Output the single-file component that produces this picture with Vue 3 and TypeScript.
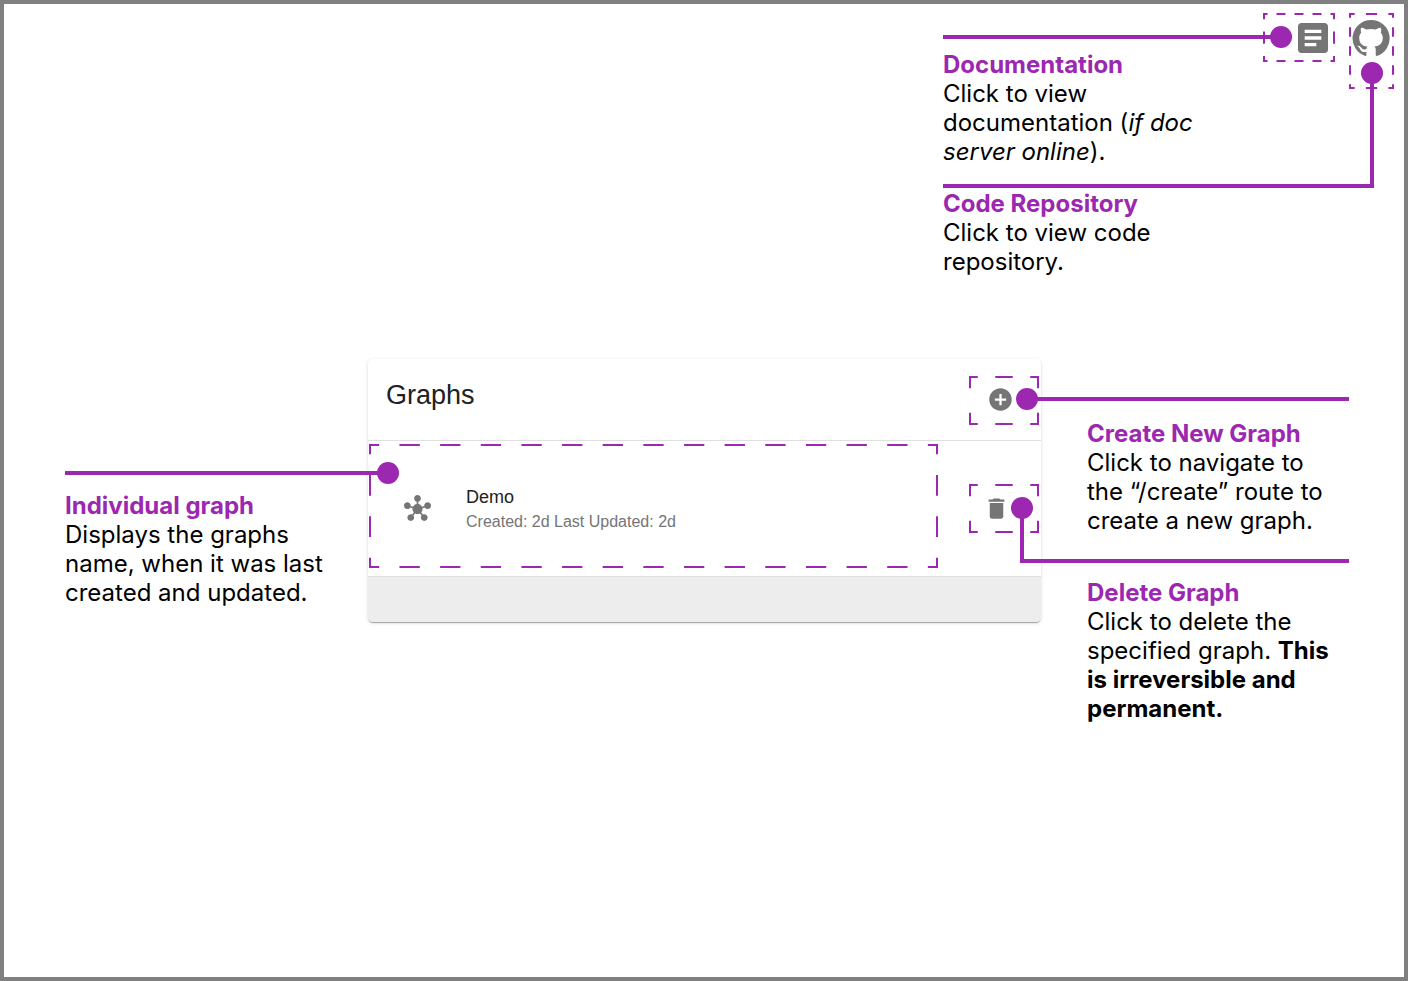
<script setup lang="ts">
import { defineComponent, h } from 'vue'

interface Graph {
  name: string
  created: string
  updated: string
}

const graphs: Graph[] = [{ name: 'Demo', created: '2d', updated: '2d' }]

// A dashed frame: each side holds a whole number of dash periods,
// with half a dash at either corner.
const DashedFrame = defineComponent({
  props: {
    across: { type: Number, required: true },
    down: { type: Number, required: true },
  },
  setup(props) {
    const side = (x1: string, y1: string, x2: string, y2: string, periods: number) =>
      h('line', {
        x1,
        y1,
        x2,
        y2,
        pathLength: periods * 4,
        stroke: '#9c27b0',
        'stroke-width': 4,
        'stroke-dasharray': '2 2',
        'stroke-dashoffset': 1,
      })
    return () =>
      h('svg', { 'aria-hidden': 'true' }, [
        side('0', '0', '100%', '0', props.across),
        side('0', '100%', '100%', '100%', props.across),
        side('0', '0', '0', '100%', props.down),
        side('100%', '0', '100%', '100%', props.down),
      ])
  },
})
</script>

<template>
  <div class="page">
    <header class="top">
      <div class="top-notes">
        <section class="note">
          <h2>Documentation</h2>
          <p>Click to view documentation (<em>if doc server online</em>).</p>
        </section>
        <section class="note">
          <h2>Code Repository</h2>
          <p>Click to view code repository.</p>
        </section>
      </div>
      <div class="target docs">
        <a href="#docs" aria-label="Documentation">
          <svg viewBox="0 0 24 24" width="40" height="40">
            <path d="M19 3H5c-1.1 0-2 .9-2 2v14c0 1.1.9 2 2 2h14c1.1 0 2-.9 2-2V5c0-1.1-.9-2-2-2zm-5 14H7v-2h7v2zm3-4H7v-2h10v2zm0-4H7V7h10v2z" />
          </svg>
        </a>
        <DashedFrame class="frame" :across="4" :down="2" />
        <span class="wire"></span>
        <span class="dot"></span>
      </div>
      <div class="target repo">
        <a href="#repository" aria-label="Code repository">
          <svg viewBox="0 0 24 24" width="40" height="40">
            <path d="M12 1.27a11 11 0 00-3.48 21.46c.55.09.73-.28.73-.55v-1.84c-3.03.64-3.67-1.46-3.67-1.46-.55-1.29-1.28-1.65-1.28-1.65-.92-.65.1-.65.1-.65 1.1 0 1.73 1.1 1.73 1.1.92 1.65 2.57 1.2 3.21.92a2 2 0 01.64-1.47c-2.47-.27-5.04-1.19-5.04-5.5 0-1.1.46-2.1 1.2-2.84a3.76 3.76 0 010-2.93s.91-.28 3.11 1.1c1.8-.49 3.7-.49 5.5 0 2.1-1.38 3.02-1.1 3.02-1.1a3.76 3.76 0 01.1 2.93c.83.74 1.2 1.74 1.2 2.94 0 4.21-2.57 5.13-5.04 5.4.45.37.82.92.82 2.02v3.03c0 .27.1.64.73.55A11 11 0 0012 1.27" />
          </svg>
        </a>
        <DashedFrame class="frame" :across="2" :down="4" />
        <span class="wire"></span>
        <span class="dot"></span>
      </div>
    </header>

    <aside class="notes-left">
      <section class="note">
        <h2>Individual graph</h2>
        <p>Displays the graphs name, when it was last created and updated.</p>
      </section>
    </aside>

    <main class="card">
      <div class="card-head">
        <h1>Graphs</h1>
        <div class="target create">
          <button type="button" aria-label="Create new graph">
            <svg viewBox="0 0 24 24" width="27" height="27">
              <path d="M12 2C6.48 2 2 6.48 2 12s4.48 10 10 10 10-4.48 10-10S17.52 2 12 2zm5 11h-4v4h-2v-4H7v-2h4V7h2v4h4v2z" />
            </svg>
          </button>
          <DashedFrame class="frame" :across="2" :down="1" />
          <span class="wire"></span>
          <span class="dot"></span>
        </div>
      </div>
      <ul class="list">
        <li v-for="graph in graphs" :key="graph.name" class="row">
          <div class="target item">
            <button type="button" class="item-button">
              <svg viewBox="0 0 24 24" width="27" height="27" aria-hidden="true">
                <path d="M8.4 18.2c.38.5.6 1.12.6 1.8 0 1.66-1.34 3-3 3s-3-1.34-3-3 1.34-3 3-3c.44 0 .85.09 1.23.26l1.41-1.77c-.92-1.03-1.29-2.39-1.09-3.69l-2.03-.68c-.54.83-1.46 1.38-2.52 1.38-1.66 0-3-1.34-3-3s1.34-3 3-3 3 1.34 3 3c0 .07 0 .14-.01.21l2.03.68c.64-1.21 1.82-2.09 3.22-2.32V5.91C9.96 5.57 9 4.4 9 3c0-1.66 1.34-3 3-3s3 1.34 3 3c0 1.4-.96 2.57-2.25 2.91v2.16c1.4.23 2.58 1.11 3.22 2.32l2.03-.68C18 9.64 18 9.57 18 9.5c0-1.66 1.34-3 3-3s3 1.34 3 3-1.34 3-3 3c-1.06 0-1.98-.55-2.52-1.37l-2.03.68c.2 1.29-.16 2.65-1.09 3.69l1.41 1.77c.38-.18.79-.27 1.23-.27 1.66 0 3 1.34 3 3s-1.34 3-3 3-3-1.34-3-3c0-.68.22-1.3.6-1.8l-1.41-1.77c-1.35.75-3.01.76-4.37 0L8.4 18.2z" />
              </svg>
              <span class="item-text">
                <span class="item-name">{{ graph.name }}</span>
                <span class="item-dates">Created: {{ graph.created }} Last Updated: {{ graph.updated }}</span>
              </span>
            </button>
            <DashedFrame class="frame" :across="14" :down="3" />
            <span class="wire"></span>
            <span class="dot"></span>
          </div>
          <div class="target delete">
            <button type="button" :aria-label="`Delete ${graph.name}`">
              <svg viewBox="0 0 24 24" width="27" height="27">
                <path d="M6 19c0 1.1.9 2 2 2h8c1.1 0 2-.9 2-2V7H6v12zM19 4h-3.5l-1-1h-5l-1 1H5v2h14V4z" />
              </svg>
            </button>
            <DashedFrame class="frame" :across="2" :down="1" />
            <span class="wire"></span>
            <span class="dot"></span>
          </div>
        </li>
      </ul>
      <div class="card-foot"></div>
    </main>

    <aside class="notes-right">
      <section class="note">
        <h2>Create New Graph</h2>
        <p>Click to navigate to the “/create” route to create a new graph.</p>
      </section>
      <section class="note">
        <h2>Delete Graph</h2>
        <p>Click to delete the specified graph. <strong>This is irreversible and permanent.</strong></p>
      </section>
    </aside>
  </div>
</template>

<style>
body {
  margin: 0;
}
</style>

<style scoped>
.page {
  --accent: #9c27b0;
  box-sizing: border-box;
  min-height: 100vh;
  border: 4px solid #808080;
  background: #fff;
  display: grid;
  grid-template-columns: 1fr 674px 1fr;
  grid-template-rows: 1fr auto 1fr;
  font-family: 'Liberation Sans', Arial, sans-serif;
}

h1,
h2,
p,
ul {
  margin: 0;
  padding: 0;
}

/* Notes */
.note {
  width: 262px;
  font-family: Inter, sans-serif;
  font-size: 24px;
  line-height: 29px;
  color: #000;
}

.note h2 {
  font-size: 24px;
  font-weight: 700;
  color: var(--accent);
}

.note strong {
  font-weight: 700;
}

.top {
  grid-column: 1 / -1;
  grid-row: 1;
  display: flex;
  justify-content: flex-end;
  align-items: flex-start;
  padding: 9px 10px 0 0;
}

.top-notes {
  width: 320px;
  padding-top: 37px;
  display: flex;
  flex-direction: column;
  gap: 23px;
}

.notes-left {
  grid-column: 1;
  grid-row: 2 / 4;
  padding: 132px 0 0 61px;
}

.notes-right {
  grid-column: 3;
  grid-row: 2 / 4;
  padding: 60px 0 0 46px;
  display: flex;
  flex-direction: column;
  gap: 43px;
}

.notes-right .note {
  width: 250px;
}

/* Highlighted controls with their leader lines */
.target {
  position: relative;
  box-sizing: border-box;
  flex: none;
}

.target a,
.target button {
  display: block;
  width: fit-content;
  padding: 0;
  border: 0;
  background: none;
  color: #757575;
  cursor: pointer;
}

.target a svg,
.target button svg {
  display: block;
  flex: none;
  fill: currentColor;
}

.frame {
  position: absolute;
  top: 0;
  left: 0;
  width: 100%;
  height: 100%;
  overflow: hidden;
  pointer-events: none;
}

.dot,
.wire {
  position: absolute;
  box-sizing: border-box;
  pointer-events: none;
}

.dot {
  width: 22px;
  height: 22px;
  border-radius: 50%;
  background: var(--accent);
}

.wire {
  border: 0 solid var(--accent);
}

.docs {
  width: 72px;
  height: 49px;
  padding: 5px 0 0 30px;
  margin-right: 14px;
}

.docs .dot {
  left: 7px;
  top: 13px;
}

.docs .wire {
  left: -320px;
  top: 22px;
  width: 338px;
  border-top-width: 4px;
}

.repo {
  width: 45px;
  height: 76px;
  padding: 5px 0 0 2px;
}

.repo .dot {
  left: 12px;
  top: 49px;
}

.repo .wire {
  left: -406px;
  top: 60px;
  width: 431px;
  height: 115px;
  border-right-width: 4px;
  border-bottom-width: 4px;
}

.create {
  width: 70px;
  height: 49px;
  padding: 10px 0 0 18px;
}

.create .dot {
  left: 47px;
  top: 12px;
}

.create .wire {
  left: 58px;
  top: 21px;
  width: 322px;
  border-top-width: 4px;
}

.delete {
  width: 70px;
  height: 49px;
  padding: 11px 0 0 14px;
}

.delete .dot {
  left: 42px;
  top: 13px;
}

.delete .wire {
  left: 51px;
  top: 24px;
  width: 329px;
  height: 55px;
  border-left-width: 4px;
  border-bottom-width: 4px;
}

.item {
  flex: 1;
  align-self: stretch;
}

.item .frame {
  top: 3px;
  height: 124px;
}

.item .dot {
  left: 8px;
  top: 21px;
}

.item .wire {
  left: -304px;
  top: 30px;
  width: 323px;
  border-top-width: 4px;
}

/* Card */
.card {
  grid-column: 2;
  grid-row: 2;
  margin-left: 1px;
  border-radius: 5px;
  background: #fff;
  box-shadow:
    0 2px 1px -1px rgba(0, 0, 0, 0.2),
    0 1px 1px 0 rgba(0, 0, 0, 0.14),
    0 1px 4px 0 rgba(0, 0, 0, 0.12);
}

.card-head {
  display: flex;
  justify-content: space-between;
  align-items: flex-start;
  padding: 17px 2px 15px 18px;
  border-bottom: 1px solid #e0e0e0;
}

.card-head h1 {
  font-size: 27px;
  line-height: 38px;
  font-weight: 400;
  color: #212121;
}

.list {
  list-style: none;
}

.row {
  display: flex;
  align-items: center;
  gap: 31px;
  height: 135px;
  padding: 0 2px 0 1px;
  border-bottom: 1px solid #e0e0e0;
}

.target .item-button {
  display: flex;
  align-items: center;
  gap: 35px;
  width: 100%;
  height: 100%;
  padding-left: 35px;
  font-family: inherit;
  text-align: left;
}

.item-text {
  display: flex;
  flex-direction: column;
}

.item-name {
  font-size: 18px;
  line-height: 26px;
  color: #212121;
}

.item-dates {
  font-size: 16px;
  line-height: 24px;
  color: #757575;
}

.card-foot {
  height: 45px;
  border-radius: 0 0 5px 5px;
  background: #ededed;
}
</style>
